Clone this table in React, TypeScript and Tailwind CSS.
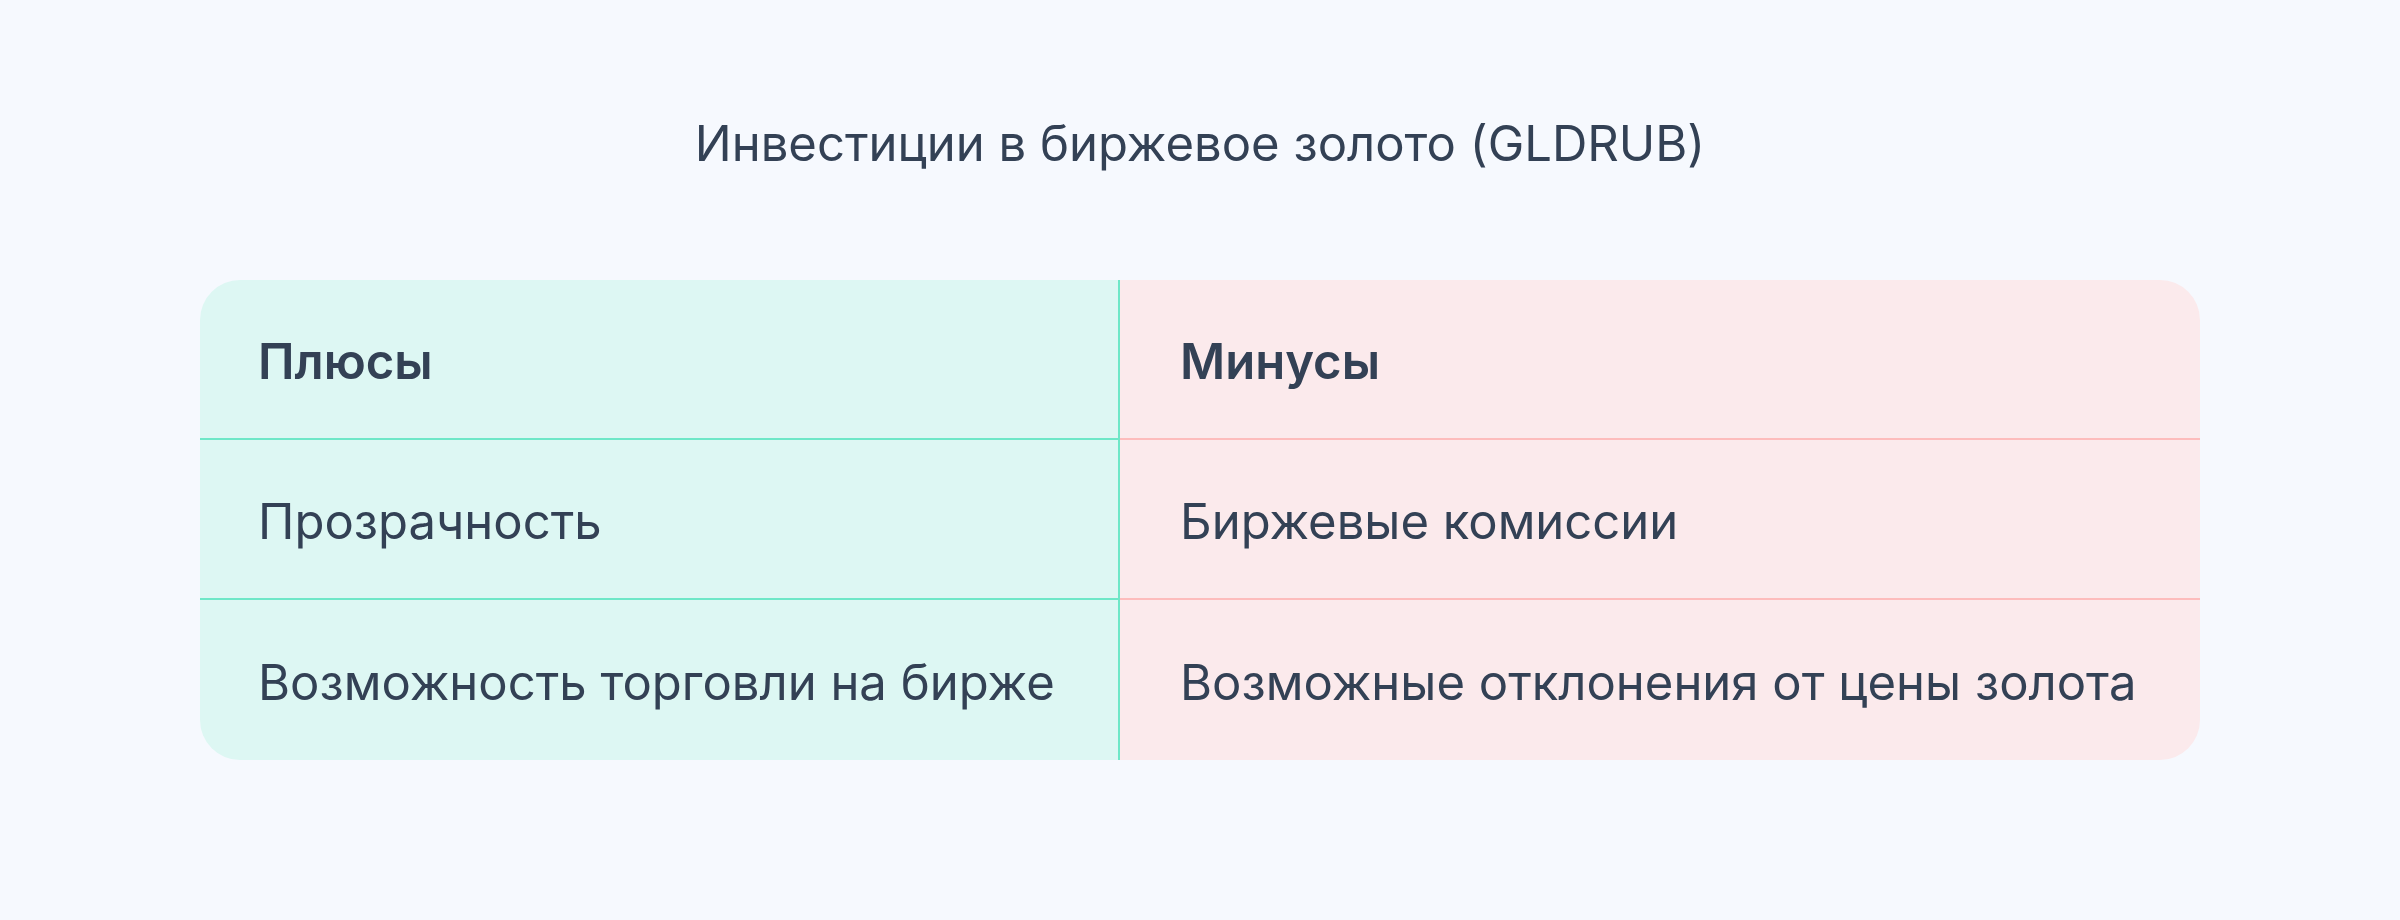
import React from 'react';

const plus = ['Прозрачность', 'Возможность торговли на бирже'];
const minus = ['Биржевые комиссии', 'Возможные отклонения от цены золота'];

const App = () => {
  return (
    <div
      className="min-h-[920px] bg-[#f6f9fe] flex flex-col items-center pt-[115px] text-[#334155]"
      style={{ fontFamily: 'Inter, "Noto Sans", sans-serif' }}
    >
      <h1 className="text-[49px] leading-[58px] font-normal">Инвестиции в биржевое золото (GLDRUB)</h1>

      <div className="mt-[107px] w-[2000px] flex rounded-[40px] overflow-hidden text-[49px]">
        <div className="w-[920px] bg-[#ddf7f3] border-r-2 border-[#6ee7c7]">
          <div className="h-[160px] flex items-center pl-[58px] pt-[5px] border-b-2 border-[#6ee7c7] font-semibold">Плюсы</div>
          {plus.map((t, i) => (
            <div
              key={t}
              className={i === 0 ? 'h-[160px] flex items-center pl-[58px] pt-[5px] border-b-2 border-[#6ee7c7]' : 'h-[160px] flex items-center pl-[58px] pt-[5px]'}
            >
              {t}
            </div>
          ))}
        </div>
        <div className="flex-1 bg-[#fbeaec]">
          <div className="h-[160px] flex items-center pl-[60px] pt-[5px] border-b-2 border-[#fdbcbc] font-semibold">Минусы</div>
          {minus.map((t, i) => (
            <div
              key={t}
              className={i === 0 ? 'h-[160px] flex items-center pl-[60px] pt-[5px] border-b-2 border-[#fdbcbc]' : 'h-[160px] flex items-center pl-[60px] pt-[5px]'}
            >
              {t}
            </div>
          ))}
        </div>
      </div>
    </div>
  );
};

export default App;
